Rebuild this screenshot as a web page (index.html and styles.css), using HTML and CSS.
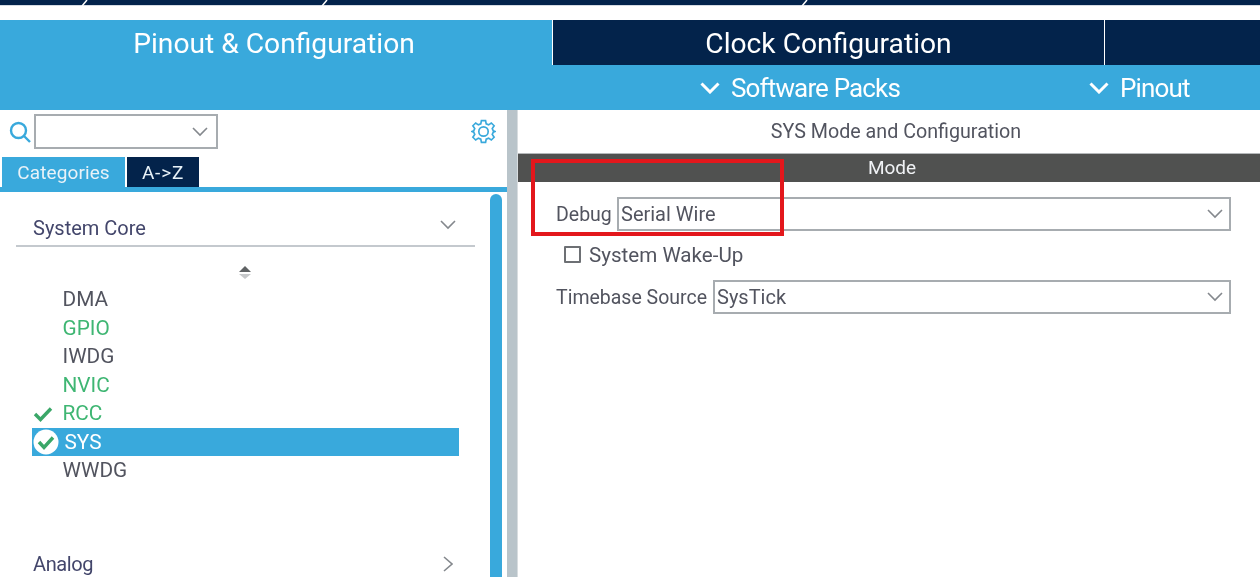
FILE: index.html
```html
<!DOCTYPE html>
<html lang="en">
<head>
    <meta charset="UTF-8">
    <title>SYS Mode and Configuration</title>
    <link rel="stylesheet" href="styles.css">
</head>
<body>
    <div class="crumbs">
        <div class="crumb crumb-a"><svg class="crumb-arrow" viewBox="0 0 10 6"><path d="M7 0 L2 6"/></svg></div>
        <div class="crumb crumb-b"><svg class="crumb-arrow" viewBox="0 0 10 6"><path d="M7 0 L2 6"/></svg></div>
        <div class="crumb crumb-c"><svg class="crumb-arrow" viewBox="0 0 10 6"><path d="M7 0 L2 6"/></svg></div>
    </div>

    <div class="tabs">
        <div class="tab tab-pinout">Pinout &amp; Configuration</div>
        <div class="tab tab-clock">Clock Configuration</div>
        <div class="tab tab-rest"></div>
    </div>

    <div class="toolbar">
        <div class="tool tool-packs">
            <svg class="tool-chevron" viewBox="0 0 20 12"><path d="M1.5 1.5 L10 10 L18.5 1.5"/></svg>
            Software Packs
        </div>
        <div class="tool tool-pinout">
            <svg class="tool-chevron" viewBox="0 0 20 12"><path d="M1.5 1.5 L10 10 L18.5 1.5"/></svg>
            Pinout
        </div>
    </div>

    <div class="main">
        <div class="side">
            <div class="search-row">
                <svg class="search-icon" viewBox="0 0 22 22"><circle cx="9.5" cy="9.5" r="7.5"/><path d="M15 15 L21 21"/></svg>
                <div class="search-box">
                    <svg class="chevron" viewBox="0 0 16 10"><path d="M1 1 L8 8 L15 1"/></svg>
                </div>
                <svg class="gear-icon" viewBox="0 0 24 24">
                    <path d="M10 1.5 H14 L14.6 4.6 L16.9 5.6 L19.5 3.8 L22.2 6.5 L20.4 9.1 L21.4 11.4 L23 12 L21.4 12.6 L20.4 14.9 L22.2 17.5 L19.5 20.2 L16.9 18.4 L14.6 19.4 L14 22.5 H10 L9.4 19.4 L7.1 18.4 L4.5 20.2 L1.8 17.5 L3.6 14.9 L2.6 12.6 L1 12 L2.6 11.4 L3.6 9.1 L1.8 6.5 L4.5 3.8 L7.1 5.6 L9.4 4.6 Z"/>
                    <circle cx="12" cy="12" r="4.5"/>
                </svg>
            </div>

            <div class="side-tabs">
                <div class="side-tab side-tab-on">Categories</div>
                <div class="side-tab side-tab-off">A-&gt;Z</div>
            </div>

            <div class="side-body">
                <div class="tree">
                    <div class="group-head">
                        <span>System Core</span>
                        <svg class="chevron" viewBox="0 0 16 10"><path d="M1 1 L8 8 L15 1"/></svg>
                    </div>
                    <div class="sorter">
                        <span class="sort-up"></span>
                        <span class="sort-down"></span>
                    </div>
                    <ul class="items">
                        <li class="item">DMA</li>
                        <li class="item item-green">GPIO</li>
                        <li class="item">IWDG</li>
                        <li class="item item-green">NVIC</li>
                        <li class="item item-green">
                            <svg class="tick" viewBox="0 0 20 16"><path d="M2 8 L7.5 13.5 L18 2.5"/></svg>
                            RCC
                        </li>
                        <li class="item item-selected">
                            <svg class="tick-round" viewBox="0 0 26 26"><circle cx="13" cy="13" r="12.5"/><path d="M6 13 L11 18.5 L20 8.5"/></svg>
                            SYS
                        </li>
                        <li class="item">WWDG</li>
                    </ul>
                    <div class="group-head group-closed">
                        <span>Analog</span>
                        <svg class="chevron-right" viewBox="0 0 10 16"><path d="M1 1 L9 8 L1 15"/></svg>
                    </div>
                </div>
                <div class="scrollbar"></div>
            </div>
        </div>

        <div class="splitter"></div>

        <div class="content">
            <div class="content-title">SYS Mode and Configuration</div>
            <div class="mode-bar">Mode</div>
            <div class="form">
                <div class="form-row">
                    <label class="form-label label-debug">Debug</label>
                    <div class="select">
                        <span>Serial Wire</span>
                        <svg class="chevron" viewBox="0 0 16 10"><path d="M1 1 L8 8 L15 1"/></svg>
                    </div>
                </div>
                <div class="check-row">
                    <span class="checkbox"></span>
                    <span>System Wake-Up</span>
                </div>
                <div class="form-row">
                    <label class="form-label label-timebase">Timebase Source</label>
                    <div class="select">
                        <span>SysTick</span>
                        <svg class="chevron" viewBox="0 0 16 10"><path d="M1 1 L8 8 L15 1"/></svg>
                    </div>
                </div>
            </div>
        </div>
    </div>

    <div class="callout"></div>
</body>
</html>
```

FILE: styles.css
```css
html, body {
    margin: 0;
    padding: 0;
    height: 100%;
    overflow: hidden;
    background-color: #fff;
    font-family: Roboto, "Liberation Sans", sans-serif;
    color: #52545f;
}
/* the source picture is a soft, upscaled capture */
body { filter: blur(0.4px); }
svg { display: block; fill: none; }

.crumbs {
    display: flex;
    height: 5px;
    margin-bottom: 15px;
    background-color: #03234b;
    border-bottom: 1px solid #d5dbe3;
    box-sizing: content-box;
}
.crumb { display: flex; justify-content: flex-end; }
.crumb-a { width: 90px; }
.crumb-b { width: 240px; }
.crumb-c { width: 480px; }
.crumb-arrow { width: 10px; height: 6px; stroke: #fff; stroke-width: 1.5; }

.tabs { display: flex; height: 45px; margin-top: -1px; }
.tab {
    display: flex;
    align-items: center;
    justify-content: center;
    box-sizing: border-box;
    font-size: 28.2px;
    color: #fff;
    padding-top: 1px;
}
.tab-pinout { width: 552px; background-color: #39a9dc; padding-right: 4px; }
.tab-clock { width: 553px; background-color: #03234b; border-left: 1px solid #fff; border-right: 1px solid #fff; }
.tab-rest { flex: 1; background-color: #03234b; }

.toolbar { display: flex; height: 45px; background-color: #39a9dc; }
.tool {
    display: flex;
    align-items: center;
    gap: 11px;
    font-size: 26px;
    letter-spacing: -0.85px;
    color: #fff;
}
.tool-packs { margin-left: 700px; width: 389px; }
.tool-chevron { width: 20px; height: 12px; stroke: #fff; stroke-width: 3; }

.main { display: flex; height: 467px; }

.side { width: 507px; display: flex; flex-direction: column; }
.search-row {
    display: flex;
    align-items: center;
    height: 47px;
    box-sizing: border-box;
    padding: 0 11px 4px 9px;
}
.search-icon { width: 22px; height: 22px; stroke: #39a9dc; stroke-width: 2.4; margin-right: 3px; }
.search-box {
    width: 184px;
    height: 35px;
    box-sizing: border-box;
    border: 2px solid #a7acb0;
    display: flex;
    align-items: center;
    justify-content: flex-end;
    padding-right: 8px;
}
.gear-icon { width: 25px; height: 25px; margin-left: auto; stroke: #39a9dc; stroke-width: 1.6; }

.chevron { width: 16px; height: 10px; stroke: #84888d; stroke-width: 1.6; }
.chevron-right { width: 10px; height: 16px; stroke: #84888d; stroke-width: 1.6; }

.side-tabs { display: flex; gap: 2px; padding-left: 2px; height: 30px; }
.side-tab {
    display: flex;
    align-items: center;
    justify-content: center;
    font-size: 19px;
    color: #e8f2f8;
}
.side-tab-on { width: 123px; background-color: #39a9dc; letter-spacing: 0.1px; }
.side-tab-off { width: 72px; background-color: #03234b; letter-spacing: 0.8px; }

.side-body {
    flex: 1;
    display: flex;
    border-top: 5px solid #39a9dc;
    padding-top: 2px;
    padding-right: 5px;
    overflow: hidden;
}
.tree { flex: 1; padding-left: 16px; padding-right: 15px; }
.scrollbar {
    width: 12px;
    height: 400px;
    background-color: #39a9dc;
    border-radius: 6px;
}

.group-head {
    display: flex;
    justify-content: space-between;
    align-items: center;
    height: 53px;
    box-sizing: border-box;
    padding: 16px 19px 0 17px;
    border-bottom: 2px solid #c4c9ce;
    font-size: 20px;
    color: #43466b;
}
.group-head .chevron { margin-bottom: 6px; }
.group-closed { border-bottom: none; height: 36px; padding-top: 0; padding-right: 22px; margin-top: 61px; letter-spacing: -0.4px; }

.sorter {
    display: flex;
    flex-direction: column;
    align-items: center;
    gap: 2px;
    width: 458px;
    padding-top: 19px;
    height: 19px;
}
.sort-up { border: 6px solid transparent; border-top: 0; border-bottom: 6px solid #5f6264; }
.sort-down { border: 6px solid transparent; border-bottom: 0; border-top: 5px solid #c6c8ca; }

.items { list-style: none; margin: 0; padding: 0 0 0 16px; width: 427px; }
.item {
    position: relative;
    display: flex;
    align-items: center;
    height: 28.5px;
    padding-left: 30.5px;
    font-size: 20.8px;
}
.item-green { color: #3fb673; }
.item-selected {
    background-color: #39a9dc;
    color: #fff;
    padding-left: 32.5px;
}
.tick {
    position: absolute;
    left: 1px;
    top: 7px;
    width: 20px;
    height: 16px;
    stroke: #3aa768;
    stroke-width: 3.4;
}
.tick-round {
    position: absolute;
    left: 1px;
    top: 1px;
    width: 26px;
    height: 26px;
}
.tick-round circle { fill: #fff; }
.tick-round path { stroke: #3aa768; stroke-width: 3.4; }

.splitter { width: 11px; background-color: #b9c4ca; border-right: 1px solid #d8dde0; box-sizing: border-box; }

.content { flex: 1; display: flex; flex-direction: column; }
.content-title {
    height: 43px;
    display: flex;
    align-items: center;
    justify-content: center;
    padding-left: 14px;
    font-size: 19.7px;
}
.mode-bar {
    height: 29px;
    background-color: #505150;
    border-top: 1px solid #b5b8ba;
    box-sizing: border-box;
    color: #f0f2f5;
    font-size: 19px;
    display: flex;
    align-items: center;
    justify-content: center;
    padding: 0 0 2px 6px;
}
.form { padding: 15px 29px 0 38px; display: flex; flex-direction: column; }
.form-row { display: flex; align-items: center; height: 34px; font-size: 19.5px; }
.form-label { white-space: nowrap; }
.label-debug { width: 61px; }
.label-timebase { width: 157px; }
.select {
    flex: 1;
    height: 34px;
    box-sizing: border-box;
    border: 2px solid #a7acb0;
    display: flex;
    align-items: center;
    justify-content: space-between;
    padding: 0 6px 0 2px;
    font-size: 20px;
}
.check-row {
    display: flex;
    align-items: center;
    gap: 8px;
    height: 47px;
    padding-left: 8px;
    padding-bottom: 2px;
    font-size: 20.6px;
}
.checkbox {
    width: 17px;
    height: 17px;
    box-sizing: border-box;
    border: 2px solid #6d7074;
    border-radius: 1px;
}

/* red annotation drawn over the screenshot */
.callout {
    position: absolute;
    left: 531px;
    top: 159px;
    width: 253px;
    height: 77px;
    box-sizing: border-box;
    border: 4px solid #e3171c;
}
```
